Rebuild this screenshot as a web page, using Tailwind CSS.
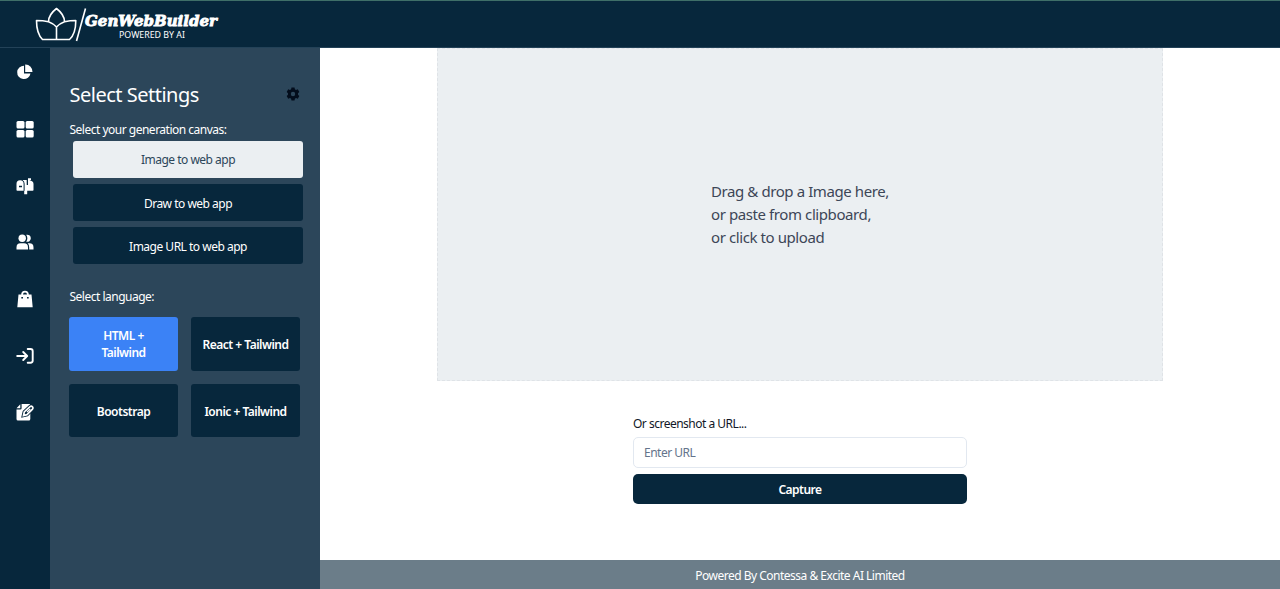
<!DOCTYPE html>
<html lang="en">
<head>
<meta charset="utf-8">
<title>GenWebBuilder</title>
<script src="https://cdn.jsdelivr.net/npm/@tailwindcss/browser@4"></script>
</head>
<body class="flex h-[589px] w-[1280px] flex-col overflow-hidden bg-white font-['Noto_Sans','Open_Sans',sans-serif] text-[12px] leading-[17px] tracking-[-0.5px] text-white">
<header class="h-[48px] shrink-0 border-t border-[#3f6f68] border-b border-b-[#234258] bg-[#07273c]">
  <svg class="block" width="240" height="46" viewBox="0 1 240 46" fill="none" stroke="white">
    <path d="M48.500 21.700Q43 20.500 36.500 20.500C36.500 30 38.500 35.500 42.500 39.500H69.500C74 35.500 75.800 30 75.800 20.500Q70 20.500 64.500 21.700M48.500 21.700C48.500 16 52 12 56.500 8.500C61 12 64.500 16 64.500 21.700Q59.500 23.500 56.500 27Q53.500 23.500 48.500 21.700M56.500 27V39" stroke-width="1.600" stroke-linejoin="round"/>
    <path d="M85.500 8.500L76.500 41" stroke-width="1.600"/>
    <text x="85" y="25.500" fill="white" stroke-width=".9" font-family="DejaVu Serif, serif" font-size="15.500" font-weight="700" font-style="italic" textLength="132" lengthAdjust="spacingAndGlyphs" letter-spacing="0">GenWebBuilder</text>
    <text x="119" y="37.500" fill="white" stroke="none" font-family="Noto Sans, sans-serif" font-size="9.500" textLength="66" lengthAdjust="spacingAndGlyphs" letter-spacing="0">POWERED BY AI</text>
  </svg>
</header>
<div class="flex min-h-0 flex-1">
  <nav class="flex w-[49.500px] shrink-0 flex-col items-center gap-[36.700px] bg-[#07273c] pt-[14.300px]">
    <svg class="size-5 shrink-0" viewBox="0 0 20 20" fill="white"><path d="M9 3.700A6.700 6.700 0 1 0 15.500 11.500H9Z"/><path d="M10.200 2.600A7 7 0 0 1 17.500 10.100H10.200Z"/></svg>
    <svg class="size-5 shrink-0" viewBox="0 0 20 20" fill="white"><rect x="1.500" y="2" width="8" height="7.500" rx="1.500"/><rect x="10.700" y="2" width="8" height="7.500" rx="1.500"/><rect x="1.500" y="10.900" width="8" height="7.500" rx="1.500"/><rect x="10.700" y="10.900" width="8" height="7.500" rx="1.500"/></svg>
    <svg class="size-5 shrink-0" viewBox="0 0 20 20" fill="white"><path fill-rule="evenodd" d="M5 4.200A3.500 3.500 0 0 1 8.600 7.700V14.700H2.300Q1.500 14.700 1.500 13.900V7.700A3.500 3.500 0 0 1 5 4.200ZM4 9.700V11.200H7V9.700Z"/><path d="M7.500 4H11.700V9H13V2.200H16V4L14.300 4.300Q18.500 4.700 18.500 8V13.900Q18.500 14.700 17.700 14.700H12.200V18.300H9.200V14.700H9.600V7.700Q9.600 5.200 7.500 4Z"/></svg>
    <svg class="size-5 shrink-0" viewBox="0 0 20 20" fill="white"><circle cx="7.200" cy="6.300" r="3.700"/><path d="M1.500 17.500V15.500Q1.500 11.300 5.500 11.300H9Q13 11.300 13 15.500V17.500Z"/><path d="M11.200 2.800A3.600 3.600 0 1 1 11.200 9.700Q13.500 6.200 11.200 2.800ZM14.200 17.500V15.500Q14.200 12.800 12.700 11.300H14.500Q18.500 11.300 18.500 15.500V17.500Z"/></svg>
    <svg class="size-5 shrink-0" viewBox="0 0 20 20" fill="white"><path fill-rule="evenodd" d="M6.200 5.500A3.800 3.800 0 0 1 13.800 5.500H16.500L17.700 18.300H2.300L3.500 5.500ZM8 5.500H12A2 2 0 0 0 8 5.500ZM6.300 8V9.600H8V8ZM12 8V9.600H13.700V8Z"/></svg>
    <svg class="size-5 shrink-0" viewBox="0 0 20 20" fill="none" stroke="white" stroke-width="1.900" stroke-linecap="round" stroke-linejoin="round"><path d="M2.200 10H12M8.200 6L12.200 10L8.200 14M12.700 3H15.500Q17.700 3 17.700 5.200V14.500Q17.700 16.700 15.500 16.700H12.700"/></svg>
    <svg class="size-5 shrink-0" viewBox="0 0 20 20" fill="white"><path d="M6.600 2H14.500L15.300 3.300 8 10.500V14H11.300L15.300 10.300V17Q15.300 18.500 13.800 18.500H3Q1.500 18.500 1.500 17V7.500H5.300Q6.600 7.500 6.600 6.200ZM5.300 2.200V6.200H1.500Z"/><path d="M8.500 13.500L9.300 10L15 4.600Q16.300 3.700 17.500 4.800Q18.500 6 17.500 7.100L12 12.700Z" fill="none" stroke="#07273c" stroke-width="3.500"/><path d="M8.500 13.500L9.300 10L15 4.600Q16.300 3.700 17.500 4.800Q18.500 6 17.500 7.100L12 12.700Z" fill="#07273c" stroke="white" stroke-width="1.700"/><path d="M12 10L15.300 7" stroke="white" stroke-width="1.200"/></svg>
  </nav>
  <aside class="w-[270.500px] shrink-0 bg-[#2c465a] pr-[20px] pl-[20px]">
    <div class="flex h-[64px] items-end justify-between">
      <h1 class="mb-[3px] text-[20px] leading-[28px] tracking-[-0.5px]">Select Settings</h1>
      <svg class="mb-[11px]" width="14" height="14" viewBox="0 0 14 14" fill="#030d1c"><path fill-rule="evenodd" d="M5.500.5H8.500L8.900 2.300 10 2.900 11.800 2.300 13.300 4.900 12 6.200V7.800L13.300 9.100 11.800 11.700 10 11.100 8.900 11.700 8.500 13.500H5.500L5.100 11.700 4 11.100 2.200 11.700.7 9.100 2 7.800V6.200L.7 4.900 2.200 2.300 4 2.900 5.100 2.300ZM7 4.800A2.200 2.200 0 1 0 7 9.200 2.200 2.200 0 1 0 7 4.800Z"/></svg>
    </div>
    <p class="mt-[9px] h-[20px]">Select your generation canvas:</p>
    <div class="-mr-[3px] ml-[3.500px] flex flex-col gap-[6px] text-center">
      <button class="h-[37px] rounded-[3px] bg-[#ebeff2] text-[#2c465a]">Image to web app</button>
      <button class="h-[37px] rounded-[3px] bg-[#07273c] pt-px">Draw to web app</button>
      <button class="h-[37px] rounded-[3px] bg-[#07273c] pt-px">Image URL to web app</button>
    </div>
    <p class="mt-[24px] mb-[12px]">Select language:</p>
    <div class="-ml-[0.500px] grid w-[231px] grid-cols-2 gap-x-[13px] gap-y-[13px] font-semibold">
      <button class="h-[53.500px] rounded-[3px] bg-[#3b82f6] pt-px">HTML +<br>Tailwind</button>
      <button class="h-[53.500px] rounded-[3px] bg-[#07273c] pt-[2px]">React + Tailwind</button>
      <button class="h-[53.500px] rounded-[3px] bg-[#07273c] pt-[2px]">Bootstrap</button>
      <button class="h-[53.500px] rounded-[3px] bg-[#07273c] pt-[2px]">Ionic + Tailwind</button>
    </div>
  </aside>
  <main class="flex min-w-0 flex-1 flex-col items-center">
    <section class="flex h-[333px] w-[726px] shrink-0 items-center justify-center border border-dashed border-[#dfe3e7] bg-[#ebeff2]">
      <p class="w-[178px] text-[15px] leading-[23.300px] tracking-[-0.41px] whitespace-nowrap text-[#3d4657]">Drag &amp; drop a Image here,<br>or paste from clipboard,<br>or click to upload</p>
    </section>
    <form class="mt-[34px] flex w-[334px] flex-col">
      <label class="mb-[5px] text-[#111827]">Or screenshot a URL...</label>
      <input class="h-[31px] rounded-[5px] border border-[#e2e8f0] px-[10px] placeholder:text-[#64748b]" placeholder="Enter URL">
      <button type="button" class="mt-[6px] h-[30px] rounded-[5px] bg-[#07273c] font-semibold">Capture</button>
    </form>
    <footer class="mt-auto flex h-[29px] w-full items-center justify-center bg-[#6b7d89] pt-[2px]">Powered By Contessa &amp; Excite AI Limited</footer>
  </main>
</div>
</body>
</html>
